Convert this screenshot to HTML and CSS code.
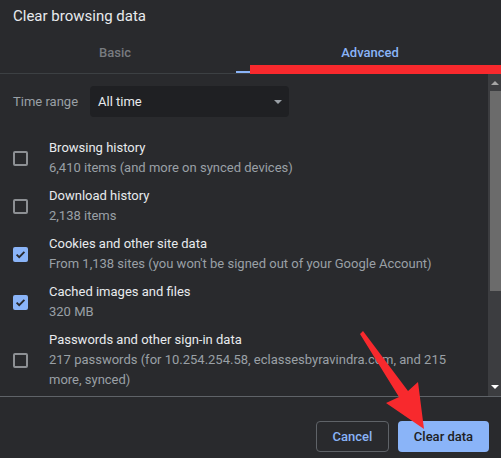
FILE: index.html
```html
<!DOCTYPE html>
<html lang="en">
<head>
<meta charset="utf-8">
<title>Clear browsing data</title>
<link rel="stylesheet" href="styles.css">
</head>
<body>
<div class="dialog">
  <h1 class="title">Clear browsing data</h1>
  <div class="tabs">
    <div class="tab tab-basic">Basic</div>
    <div class="tab tab-adv active">Advanced</div>
  </div>
  <div class="body">
    <div class="scroll">
      <div class="range-row">
        <span class="range-label">Time range</span>
        <div class="select"><span>All time</span><span class="caret"></span></div>
      </div>
      <ul class="items">
        <li class="item">
          <span class="cb"></span>
          <div class="txt"><div class="name">Browsing history</div><div class="desc">6,410 items (and more on synced devices)</div></div>
        </li>
        <li class="item">
          <span class="cb"></span>
          <div class="txt"><div class="name">Download history</div><div class="desc">2,138 items</div></div>
        </li>
        <li class="item">
          <span class="cb on"><svg viewBox="0 0 15 15" width="15" height="15"><path d="M3.6 7.6 L6.2 10.1 L11.4 4.9" fill="none" stroke="#292a2d" stroke-width="1.9"/></svg></span>
          <div class="txt"><div class="name">Cookies and other site data</div><div class="desc">From 1,138 sites (you won't be signed out of your Google Account)</div></div>
        </li>
        <li class="item">
          <span class="cb on"><svg viewBox="0 0 15 15" width="15" height="15"><path d="M3.6 7.6 L6.2 10.1 L11.4 4.9" fill="none" stroke="#292a2d" stroke-width="1.9"/></svg></span>
          <div class="txt"><div class="name">Cached images and files</div><div class="desc">320 MB</div></div>
        </li>
        <li class="item">
          <span class="cb"></span>
          <div class="txt"><div class="name">Passwords and other sign-in data</div><div class="desc">217 passwords (for 10.254.254.58, eclassesbyravindra.com, and 215 more, synced)</div></div>
        </li>
      </ul>
    </div>
    <div class="scrollbar">
      <span class="sb-up"></span>
      <div class="thumb"></div>
      <span class="sb-down"></span>
    </div>
  </div>
  <div class="footer">
    <button class="btn btn-cancel">Cancel</button>
    <button class="btn btn-primary">Clear data</button>
  </div>
  <div class="annot-bar"></div>
  <svg class="annot-arrow" viewBox="0 0 501 458" width="501" height="458">
    <polygon points="360,334 363,331 408,391 418,382 424,429 386,403 399,397" fill="#f8292d"/>
  </svg>
</div>
</body>
</html>
```

FILE: styles.css
```css
* { box-sizing: border-box; }
html, body {
  margin: 0;
  padding: 0;
  width: 501px;
  height: 458px;
  overflow: hidden;
  background: #292a2d;
  font-family: Roboto, "Liberation Sans", Arial, sans-serif;
}
.dialog {
  position: relative;
  width: 501px;
  height: 458px;
  background: #292a2d;
  display: flex;
  flex-direction: column;
}
.title {
  margin: 0;
  padding: 6px 0 0 13px;
  height: 26px;
  font-size: 15px;
  line-height: 20px;
  font-weight: 400;
  color: #e8eaed;
}
.tabs {
  display: flex;
  height: 48px;
  border-bottom: 1px solid #3c4043;
  overflow: hidden;
}
.tab {
  flex: none;
  position: relative;
  text-align: center;
  padding-top: 17px;
  font-size: 13px;
  line-height: 20px;
  font-weight: 500;
  color: #787b80;
}
.tab-basic { width: 230px; margin-right: 6px; }
.tab-adv { width: 268px; }
.tab.active { color: #8ab4f8; }
.tab.active::after {
  content: "";
  position: absolute;
  left: 0;
  right: 0;
  bottom: 0;
  height: 2px;
  background: #8ab4f8;
}
.body {
  display: flex;
  height: 322px;
}
.scroll {
  flex: 1;
  overflow: hidden;
}
.range-row {
  display: flex;
  align-items: center;
  padding: 12px 0 0 13px;
}
.range-label {
  width: 77px;
  font-size: 13px;
  line-height: 20px;
  color: #9aa0a6;
}
.select {
  width: 199px;
  height: 31px;
  background: #1f2023;
  border-radius: 4px;
  display: flex;
  align-items: center;
  justify-content: space-between;
  padding: 0 7px 0 8px;
  font-size: 13px;
  color: #e8eaed;
}
.caret {
  width: 0;
  height: 0;
  border-left: 4px solid transparent;
  border-right: 4px solid transparent;
  border-top: 4px solid #9aa0a6;
}
.items {
  list-style: none;
  margin: 0;
  padding: 17px 0 0 0;
}
.item {
  display: flex;
  align-items: center;
  padding: 4px 20px 4px 13px;
}
.cb {
  flex: none;
  width: 15px;
  height: 15px;
  border: 2px solid #8d9094;
  border-radius: 2px;
  margin-right: 21px;
  display: flex;
}
.cb.on {
  background: #8ab4f8;
  border: none;
}
.txt {
  font-size: 13px;
  line-height: 20px;
}
.name { color: #e8eaed; }
.desc { color: #9aa0a6; }
.scrollbar {
  width: 13px;
  background: #3c3d40;
  display: flex;
  flex-direction: column;
  align-items: flex-end;
  position: relative;
}
.sb-up {
  width: 0;
  height: 0;
  margin: 7px 2px 0 0;
  border-left: 4px solid transparent;
  border-right: 4px solid transparent;
  border-bottom: 4px solid #a6a6a6;
}
.thumb {
  width: 11px;
  height: 200px;
  margin-top: 6px;
  background: #6b6b6b;
}
.sb-down {
  width: 0;
  height: 0;
  margin: 94px 2px 0 0;
  border-left: 4px solid transparent;
  border-right: 4px solid transparent;
  border-top: 4px solid #ffffff;
}
.footer {
  border-top: 1px solid #5f6368;
  display: flex;
  justify-content: flex-end;
  gap: 9px;
  padding: 24px 12px 0 0;
  flex: 1;
}
.btn {
  height: 31px;
  border-radius: 4px;
  font-family: Roboto, "Liberation Sans", Arial, sans-serif;
  font-size: 13px;
  font-weight: 500;
  padding: 0;
  cursor: pointer;
}
.btn-cancel {
  width: 73px;
  background: transparent;
  border: 1px solid #5f6368;
  color: #8ab4f8;
}
.btn-primary {
  width: 91px;
  background: #8ab4f8;
  border: none;
  color: #202124;
}
.annot-bar {
  position: absolute;
  left: 250px;
  top: 65px;
  width: 251px;
  height: 9px;
  background: #f8292d;
}
.annot-arrow {
  position: absolute;
  left: 0;
  top: 0;
  pointer-events: none;
}
```
